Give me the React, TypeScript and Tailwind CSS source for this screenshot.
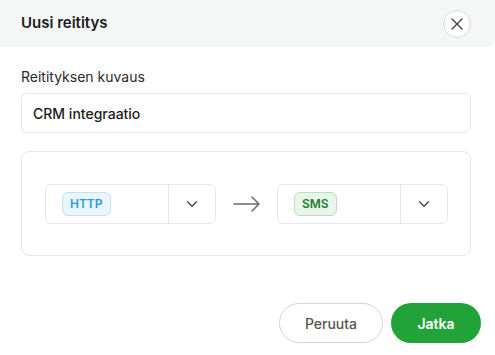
import { ChevronDown } from "lucide-react";

function Select({ label, tone }: { label: string; tone: "blue" | "green" }) {
  const badge =
    tone === "blue"
      ? "bg-[#eaf6fd] border-[#bfe3f7] text-[#2a9be0]"
      : "bg-[#e8f5ea] border-[#b9dfc0] text-[#1f7a33]";
  return (
    <div className="flex h-[40px] w-[171px] rounded-md border border-[#e3e7e6] bg-white">
      <div className="flex flex-1 items-center pl-[16px]">
        <span
          className={`rounded-md border px-[7px] py-[2px] text-[12px] font-semibold ${badge}`}
        >
          {label}
        </span>
      </div>
      <div className="flex w-[47px] items-center justify-center border-l border-[#e3e7e6]">
        <ChevronDown className="h-[18px] w-[18px] text-[#333]" strokeWidth={1.5} />
      </div>
    </div>
  );
}

export default function App() {
  return (
    <div
      className="h-[355px] w-[495px] bg-white text-[#1c1c1c]"
      style={{ fontFamily: "Inter, 'Noto Sans', sans-serif" }}
    >
      <div className="flex h-[47px] items-center justify-between rounded-br-lg bg-[#f5f7f6] pl-[21px] pr-[24px]">
        <h1 className="text-[15px] font-semibold">Uusi reititys</h1>
        <button className="flex h-[28px] w-[28px] items-center justify-center rounded-full border border-[#d9dcdb] bg-white">
          <svg width="14" height="14" viewBox="0 0 14 14" fill="none" stroke="#444" strokeWidth="1.4" strokeLinecap="round">
            <path d="M2 2l10 10M12 2L2 12" />
          </svg>
        </button>
      </div>

      <div className="w-[471px] pl-[21px] pt-[19px]">
        <label className="block text-[14px] text-[#2a2a2a]">Reitityksen kuvaus</label>
        <div className="mt-[6px] flex h-[40px] items-center rounded-md border border-[#e3e7e6] px-[11px] text-[14px] font-medium">
          CRM integraatio
        </div>

        <div className="mt-[18px] flex h-[105px] items-center rounded-lg border border-[#e3e7e6] pl-[23px] pr-[22px]">
          <Select label="HTTP" tone="blue" />
          <div className="flex flex-1 justify-center">
            <svg width="28" height="16" viewBox="0 0 28 16" fill="none" stroke="#6b6b6b" strokeWidth="1.5" strokeLinecap="round" strokeLinejoin="round">
              <path d="M1 8h25M19 1l7 7-7 7" />
            </svg>
          </div>
          <Select label="SMS" tone="green" />
        </div>
      </div>

      <div className="mt-[47px] flex justify-end gap-[8px] pr-[14px]">
        <button className="h-[40px] w-[104px] rounded-full border border-[#d5d5d5] bg-white text-[14px] font-medium text-[#555]">
          Peruuta
        </button>
        <button className="h-[40px] w-[90px] rounded-full bg-[#22a33a] text-[14px] font-semibold text-white">
          Jatka
        </button>
      </div>
    </div>
  );
}
